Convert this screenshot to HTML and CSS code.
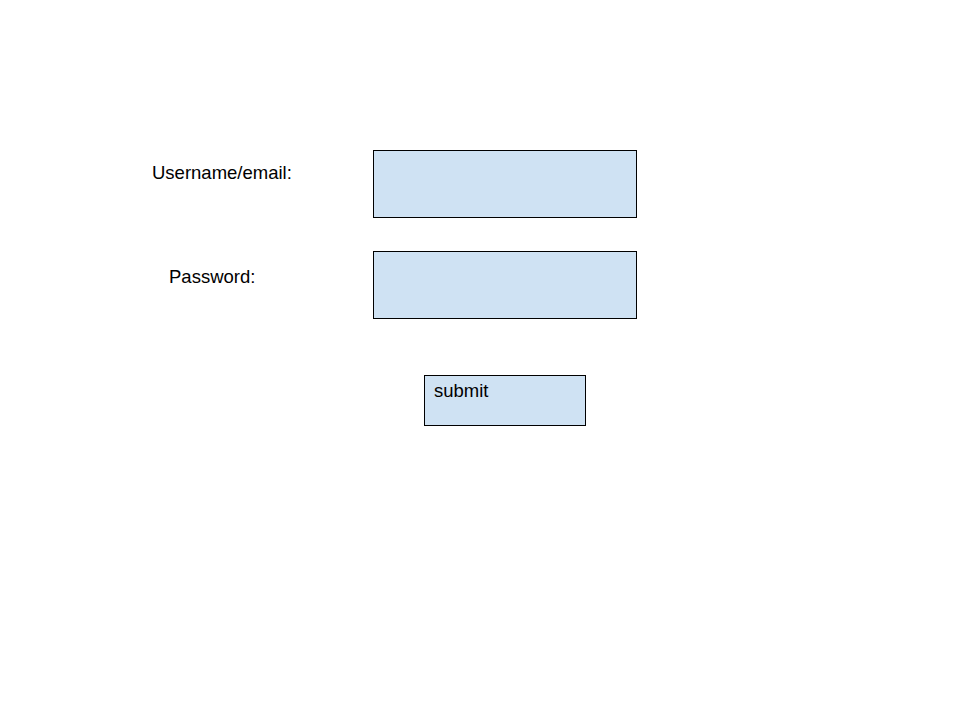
FILE: index.html
```html
<!DOCTYPE html>
<html lang="en">
<head>
  <meta charset="UTF-8" />
  <meta name="viewport" content="width=device-width, initial-scale=1" />
  <title>Login</title>
  <link rel="stylesheet" href="styles.css">
</head>
<body>
  <form class="login" onsubmit="return false;">
    <div class="field">
      <label class="label label-user" for="username">Username/email:</label>
      <input class="input" id="username" type="text" />
    </div>
    <div class="field">
      <label class="label label-pass" for="password">Password:</label>
      <input class="input" id="password" type="password" />
    </div>
    <button class="submit" type="submit">submit</button>
  </form>
</body>
</html>
```

FILE: styles.css
```css
/* Base */
* {
  box-sizing: border-box;
  margin: 0;
  padding: 0;
}
body {
  background: #fff;
  color: #000;
  font-family: 'Liberation Sans', Arial, sans-serif;
  font-size: 18.5px;
}
.login {
  display: flex;
  flex-direction: column;
  align-items: flex-start;
  padding-top: 150px;
}
.field {
  display: grid;
  grid-template-columns: 373px 264px;
  margin-bottom: 33px;
}
.field:last-of-type {
  margin-bottom: 56px;
}
.label {
  font-size: 18.5px;
  line-height: 21px;
}
.label-user {
  padding: 12px 0 0 152px;
}
.label-pass {
  padding: 15px 0 0 169px;
}
.input {
  height: 68px;
  width: 264px;
  background: #cfe2f3;
  border: 1px solid #000;
  outline: none;
  font: inherit;
  padding: 0 8px;
}
.submit {
  margin-left: 424px;
  width: 162px;
  padding: 4px 0 24px 9px;
  background: #cfe2f3;
  border: 1px solid #000;
  border-radius: 0;
  font-family: inherit;
  font-size: 18.5px;
  line-height: 21px;
  text-align: left;
  color: #000;
  cursor: pointer;
}
```
